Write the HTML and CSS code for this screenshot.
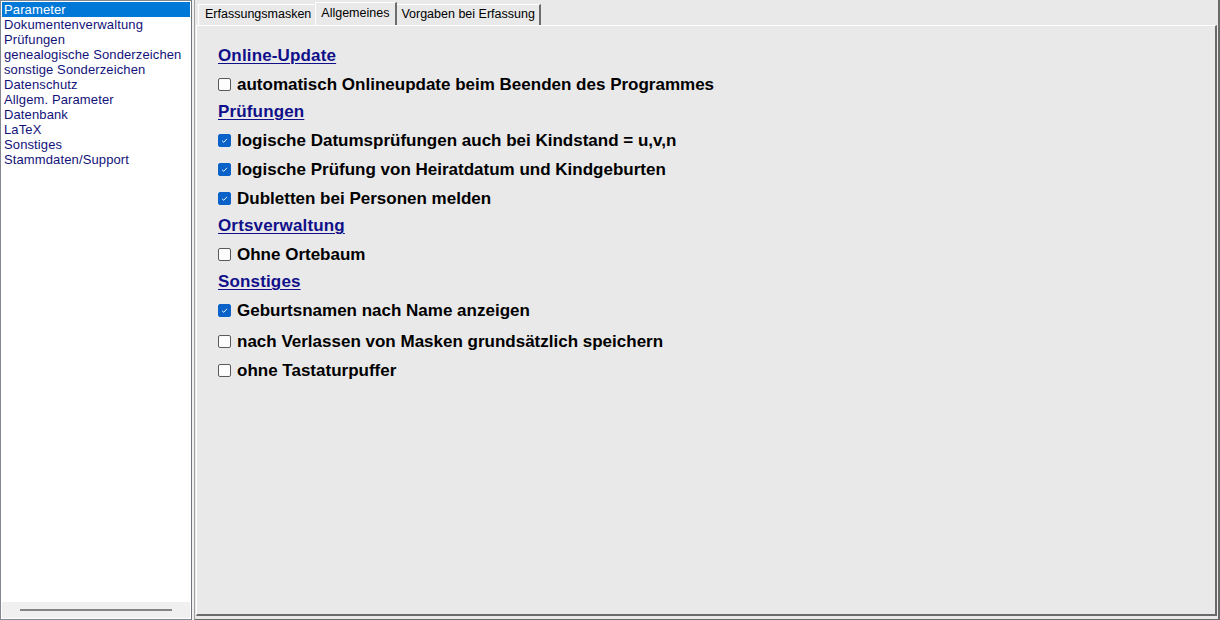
FILE: index.html
```html
<!DOCTYPE html>
<html lang="de">
<head>
<meta charset="utf-8">
<title>Parameter</title>
<link rel="stylesheet" href="styles.css">
</head>
<body>
<div class="app">
  <aside class="sidebar">
    <ul class="nav">
      <li class="nav-item selected">Parameter</li>
      <li class="nav-item">Dokumentenverwaltung</li>
      <li class="nav-item">Prüfungen</li>
      <li class="nav-item">genealogische Sonderzeichen</li>
      <li class="nav-item">sonstige Sonderzeichen</li>
      <li class="nav-item">Datenschutz</li>
      <li class="nav-item">Allgem. Parameter</li>
      <li class="nav-item">Datenbank</li>
      <li class="nav-item">LaTeX</li>
      <li class="nav-item">Sonstiges</li>
      <li class="nav-item">Stammdaten/Support</li>
    </ul>
    <div class="hscroll"><div class="hscroll-thumb"></div></div>
  </aside>
  <main class="main">
    <div class="tabs">
      <div class="tab">Erfassungsmasken</div>
      <div class="tab active">Allgemeines</div>
      <div class="tab last">Vorgaben bei Erfassung</div>
    </div>
    <section class="panel">
      <div class="content">
        <div class="heading">Online-Update</div>
        <label class="row"><span class="cb"></span>automatisch Onlineupdate beim Beenden des Programmes</label>
        <div class="heading">Prüfungen</div>
        <label class="row"><span class="cb checked"><svg viewBox="0 0 13 13"><path d="M3.6 6.8 L5.6 8.6 L9.4 4.6" fill="none" stroke="#fff" stroke-width="1.1"/></svg></span>logische Datumsprüfungen auch bei Kindstand = u,v,n</label>
        <label class="row"><span class="cb checked"><svg viewBox="0 0 13 13"><path d="M3.6 6.8 L5.6 8.6 L9.4 4.6" fill="none" stroke="#fff" stroke-width="1.1"/></svg></span>logische Prüfung von Heiratdatum und Kindgeburten</label>
        <label class="row"><span class="cb checked"><svg viewBox="0 0 13 13"><path d="M3.6 6.8 L5.6 8.6 L9.4 4.6" fill="none" stroke="#fff" stroke-width="1.1"/></svg></span>Dubletten bei Personen melden</label>
        <div class="heading">Ortsverwaltung</div>
        <label class="row"><span class="cb"></span>Ohne Ortebaum</label>
        <div class="heading">Sonstiges</div>
        <label class="row"><span class="cb checked"><svg viewBox="0 0 13 13"><path d="M3.6 6.8 L5.6 8.6 L9.4 4.6" fill="none" stroke="#fff" stroke-width="1.1"/></svg></span>Geburtsnamen nach Name anzeigen</label>
        <label class="row gap"><span class="cb"></span>nach Verlassen von Masken grundsätzlich speichern</label>
        <label class="row"><span class="cb"></span>ohne Tastaturpuffer</label>
      </div>
    </section>
  </main>
</div>
</body>
</html>
```

FILE: styles.css
```css
* { box-sizing: border-box; }
html, body { margin: 0; padding: 0; }
body {
  width: 1220px;
  height: 620px;
  background: #f0f0f0;
  font-family: "Liberation Sans", Arial, sans-serif;
  overflow: hidden;
}
.app {
  display: flex;
  height: 620px;
}
.sidebar {
  width: 192px;
  height: 620px;
  border: 1px solid #828790;
  border-right-color: #70747c;
  background: #fff;
  display: flex;
  flex-direction: column;
}
.nav {
  list-style: none;
  margin: 0;
  padding: 1px 1px 0 1px;
  flex: 1;
}
.nav-item {
  height: 15px;
  line-height: 15px;
  font-size: 13px;
  letter-spacing: 0.12px;
  color: #12127a;
  padding-left: 2px;
  white-space: nowrap;
}
.nav-item.selected {
  background: #0078d7;
  color: #fff;
}
.hscroll {
  height: 16px;
  margin: 0 1px 1px 1px;
  background: #f0f0f0;
  display: flex;
  align-items: center;
  padding-left: 18px;
}
.hscroll-thumb {
  width: 152px;
  height: 2px;
  background: #858585;
}
.main {
  flex: 1;
  margin-left: 2px;
  display: flex;
  flex-direction: column;
  background: #e9e9e9;
  border-left: 1px solid #a0a0a0;
  border-right: 2px solid #6a6a6a;
  border-bottom: 1px solid #6a6a6a;
  padding: 2px 0 1px 1px;
}
.tabs {
  display: flex;
  height: 23px;
  align-items: flex-end;
  padding-left: 2px;
}
.tab {
  height: 21px;
  line-height: 19px;
  font-size: 12.5px;
  color: #000;
  padding: 0 3px 0 6px;
  border-top: 1px solid #ffffff;
  border-left: 1px solid #ffffff;
  background: #e9e9e9;
  white-space: nowrap;
}
.tab.active {
  height: 23px;
  line-height: 21px;
  padding: 0 6px 0 5px;
  border-right: 2px solid #6d6d6d;
  margin-left: 1px;
}
.tab.last {
  border-left: none;
  padding-left: 4px;
  padding-right: 4px;
  border-right: 2px solid #6d6d6d;
}
.panel {
  flex: 1;
  border-top: 1px solid #ffffff;
  border-left: 1px solid #ffffff;
  border-right: 2px solid #6a6a6a;
  border-bottom: 2px solid #6a6a6a;
  margin-right: 1px;
  margin-bottom: 2px;
  background: #e9e9e9;
}
.content {
  padding: 17px 0 0 21px;
  display: flex;
  flex-direction: column;
}
.heading {
  height: 27px;
  line-height: 25px;
  font-size: 17px;
  letter-spacing: 0.15px;
  font-weight: bold;
  color: #10108a;
  text-decoration: underline;
  text-underline-offset: 2px;
  text-decoration-thickness: 1px;
}
.row {
  height: 29px;
  display: flex;
  align-items: center;
  font-size: 17px;
  font-weight: bold;
  color: #000;
  white-space: nowrap;
}
.row.gap { margin-top: 2px; }
.cb {
  width: 13px;
  height: 13px;
  border: 1px solid #5a5a5a;
  border-radius: 2px;
  background: #fdfdfd;
  margin-right: 6px;
  flex: none;
  display: flex;
}
.cb.checked {
  background: #0a62c9;
  border-color: #0a62c9;
}
.cb svg {
  width: 11px;
  height: 11px;
}
```
